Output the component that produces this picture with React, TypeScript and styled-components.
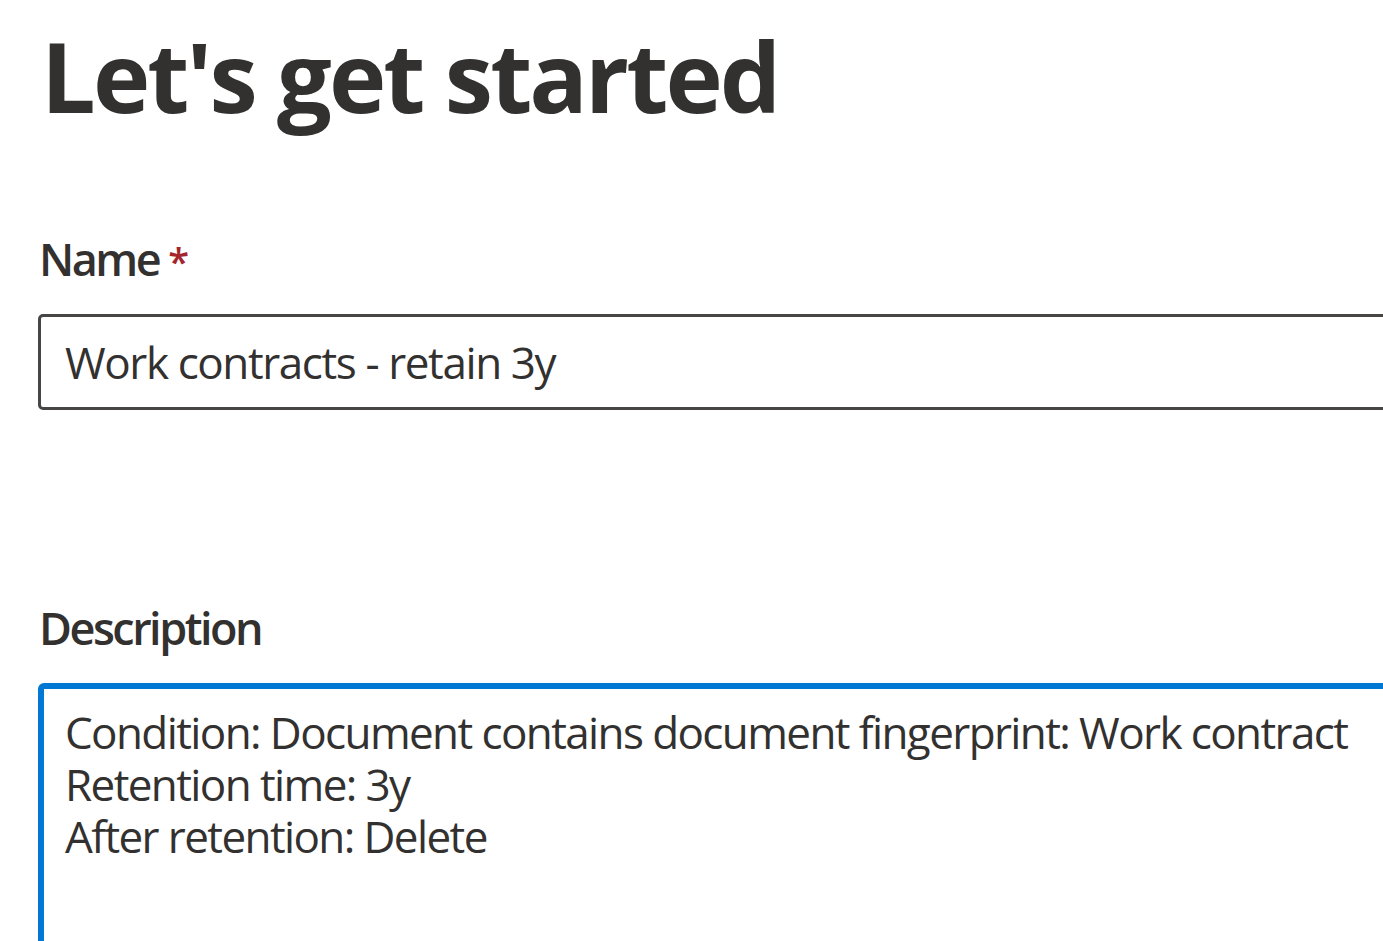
import React from "react";
import styled, { createGlobalStyle } from "styled-components";

const GlobalStyle = createGlobalStyle`
  html, body {
    margin: 0;
    padding: 0;
    background: #ffffff;
    overflow: hidden;
  }
  body {
    font-family: "Open Sans", "Noto Sans", "Liberation Sans", sans-serif;
    color: #323130;
  }
`;

const Page = styled.main`
  width: 1383px;
  height: 941px;
  overflow: hidden;
  padding: 17px 0 0 38px;
  box-sizing: border-box;
`;

const Title = styled.h1`
  margin: 0 0 0 3px;
  font-size: 97px;
  line-height: 116px;
  font-weight: 700;
  letter-spacing: -2.9px;
  color: #323130;
  white-space: nowrap;
`;

const Field = styled.section<{ $gap: number }>`
  display: flex;
  flex-direction: column;
  margin-top: ${(p) => p.$gap}px;
`;

const Label = styled.label`
  display: flex;
  align-items: baseline;
  gap: 9px;
  height: 60px;
  margin: 0 0 25px 1px;
  font-size: 45px;
  line-height: 60px;
  font-weight: 600;
  letter-spacing: -2.5px;
  color: #323130;
`;

const Required = styled.span`
  color: #a4262c;
  font-size: 38px;
  line-height: 38px;
  font-weight: 600;
  letter-spacing: 0;
`;

const TextInput = styled.input`
  box-sizing: border-box;
  width: 1400px;
  height: 96px;
  margin: 0;
  padding: 0 0 0 24px;
  border: 3px solid #474645;
  border-radius: 5px;
  font-family: inherit;
  font-size: 44px;
  line-height: 90px;
  letter-spacing: -1.4px;
  color: #323130;
  background: #ffffff;
  outline: none;
`;

const TextArea = styled.textarea`
  box-sizing: border-box;
  width: 1400px;
  height: 400px;
  margin: 0;
  padding: 17px 0 0 21px;
  border: 6px solid #0078d4;
  border-radius: 6px;
  font-family: inherit;
  font-size: 44px;
  line-height: 52px;
  letter-spacing: -1.6px;
  color: #323130;
  background: #ffffff;
  outline: none;
  resize: none;
  overflow: hidden;
`;

export default function App() {
  return (
    <>
      <GlobalStyle />
      <Page>
        <Title>Let's get started</Title>
        <Field $gap={96}>
          <Label htmlFor="name">
            Name <Required>*</Required>
          </Label>
          <TextInput id="name" defaultValue="Work contracts - retain 3y" />
        </Field>
        <Field $gap={188}>
          <Label htmlFor="desc">Description</Label>
          <TextArea
            id="desc"
            defaultValue={
              "Condition: Document contains document fingerprint: Work contract\nRetention time: 3y\nAfter retention: Delete"
            }
          />
        </Field>
      </Page>
    </>
  );
}
